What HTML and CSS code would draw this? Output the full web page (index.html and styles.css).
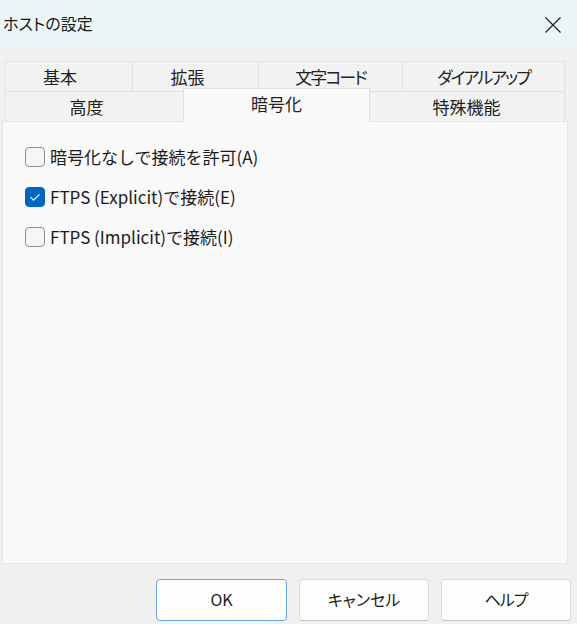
FILE: index.html
```html
<!DOCTYPE html>
<html lang="ja">
<head>
<meta charset="utf-8">
<title>ホストの設定</title>
<link rel="stylesheet" href="styles.css">
</head>
<body>
<div class="dialog">
  <div class="titlebar">
    <span class="title">ホストの設定</span>
    <svg class="close" width="18" height="18" viewBox="0 0 18 18"><path d="M1.5 1.5 L16.5 16.5 M16.5 1.5 L1.5 16.5" stroke="#1f1f1f" stroke-width="1.2" fill="none"/></svg>
  </div>
  <div class="tabs">
    <div class="tab-row">
      <div class="tab t-basic"><span class="shift-a">基本</span></div>
      <div class="tab t-ext"><span class="shift-b">拡張</span></div>
      <div class="tab t-char"><span class="kana">文字コード</span></div>
      <div class="tab t-dial last"><span class="kana">ダイアルアップ</span></div>
    </div>
    <div class="tab-row">
      <div class="tab t-adv"><span class="shift-a">高度</span></div>
      <div class="tab t-enc selected">暗号化</div>
      <div class="tab t-spec last">特殊機能</div>
    </div>
  </div>
  <div class="panel">
    <label class="opt"><span class="box"></span><span class="lbl">暗号化なしで接続を許可(A)</span></label>
    <label class="opt"><span class="box checked"><svg width="20" height="20" viewBox="0 0 20 20"><path d="M5.5 10.2 L8.6 13.2 L14.5 7.3" stroke="#ffffff" stroke-width="1.1" fill="none"/></svg></span><span class="lbl">FTPS (Explicit)で接続(E)</span></label>
    <label class="opt"><span class="box"></span><span class="lbl">FTPS (Implicit)で接続(I)</span></label>
  </div>
  <div class="buttons">
    <button class="btn default">OK</button>
    <button class="btn">キャンセル</button>
    <button class="btn"><span class="kana-btn">ヘルプ</span></button>
  </div>
</div>
</body>
</html>
```

FILE: styles.css
```css
html, body {
  margin: 0;
  padding: 0;
}
body {
  background: #f0f0f0;
  font-family: "Noto Sans CJK JP", "Noto Sans", sans-serif;
  color: #1b1b1b;
  width: 577px;
  height: 624px;
  overflow: hidden;
}
.dialog {
  display: flex;
  flex-direction: column;
}
.titlebar {
  height: 47px;
  background: #e9f5f7;
  display: flex;
  align-items: center;
  justify-content: space-between;
  padding: 0 15px 0 3px;
}
.title {
  font-size: 16px;
  font-feature-settings: "palt";
  color: #1a1a1a;
  margin-top: -2px;
}
.close {
  display: block;
  margin-top: 2px;
}
.tabs {
  margin-top: 14px;
  padding-left: 5px;
  display: flex;
  flex-direction: column;
}
.tab-row {
  display: flex;
  height: 30px;
}
.tab {
  box-sizing: border-box;
  height: 30px;
  border-top: 1px solid #e2e2e2;
  border-left: 1px solid #e2e2e2;
  background: #f2f2f2;
  display: flex;
  align-items: center;
  justify-content: center;
  font-size: 17px;
  font-feature-settings: "palt";
  color: #222;
  padding-bottom: 1px;
}
.tab.last {
  border-right: 1px solid #e2e2e2;
}
.t-basic { width: 127px; }
.t-ext { width: 126px; }
.t-char { width: 144px; }
.t-dial { width: 163px; }
.t-adv { width: 180px; }
.t-spec { width: 197px; }
.t-enc { width: 187px; }
.shift-a { margin-right: 18px; }
.shift-b { margin-right: 16px; }
.kana { letter-spacing: -2px; }
.kana-btn { letter-spacing: -1px; }
.tab.selected {
  position: relative;
  z-index: 1;
  margin: -3px -2px -1px -2px;
  height: 34px;
  background: #f9f9f9;
  border: 1px solid #e2e2e2;
  border-bottom: none;
  padding-bottom: 5px;
}
.panel {
  box-sizing: border-box;
  margin: 0 9px 0 2px;
  height: 443px;
  background: #f9f9f9;
  border: 1px solid #e6e6e6;
  padding: 25px 0 0 22px;
  display: flex;
  flex-direction: column;
  gap: 20px;
}
.opt {
  display: flex;
  align-items: center;
  gap: 5px;
  height: 20px;
  font-size: 17px;
  color: #1b1b1b;
}
.box {
  box-sizing: border-box;
  width: 20px;
  height: 20px;
  border: 1px solid #8e8e8e;
  border-radius: 4px;
  background: #f6f6f6;
  display: block;
}
.box.checked {
  background: #0067c0;
  border-color: #0067c0;
}
.box svg {
  display: block;
  margin: -1px;
}
.lbl {
  line-height: 20px;
  margin-top: -1px;
}
.buttons {
  display: flex;
  justify-content: flex-end;
  gap: 12px;
  padding-right: 6px;
  margin-top: 15px;
}
.btn {
  box-sizing: border-box;
  width: 130px;
  height: 42px;
  background: #fdfdfd;
  border: 1px solid #dcdcdc;
  border-bottom-color: #c4c4c4;
  border-radius: 4px;
  font-family: "Noto Sans CJK JP", "Noto Sans", sans-serif;
  font-size: 16px;
  font-feature-settings: "palt";
  color: #1b1b1b;
  padding: 0 0 2px 0;
}
.btn.default {
  width: 131px;
  border: 1px solid #6aa6e6;
}
```
